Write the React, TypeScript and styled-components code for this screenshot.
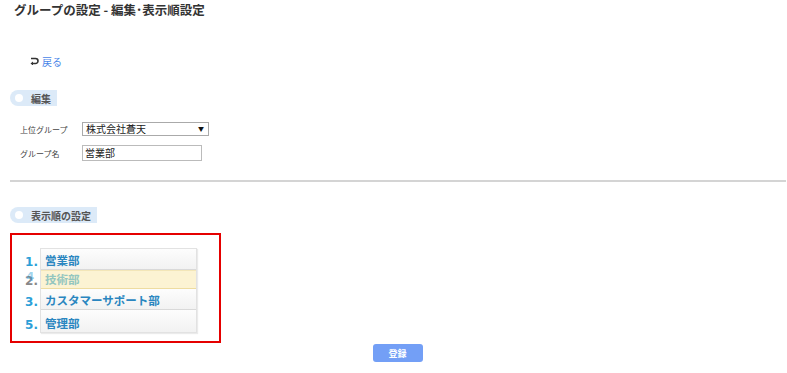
import React from "react";
import styled, { createGlobalStyle } from "styled-components";

const Global = createGlobalStyle`
  html, body { margin: 0; padding: 0; background: #fff; }
  body { font-family: "Noto Sans CJK JP", "Liberation Sans", sans-serif; color: #333; }
`;

const Page = styled.div`
  width: 787px;
  display: flex;
  flex-direction: column;
`;

const Title = styled.h1`
  margin: 0;
  padding: 2px 0 0 14px;
  height: 20px;
  font-size: 12.5px;
  font-weight: bold;
  line-height: 16px;
  color: #333;
`;

const BackLink = styled.a`
  margin: 31px 0 0 30px;
  display: flex;
  align-items: center;
  gap: 3px;
  height: 16px;
  font-size: 10px;
  color: #4a86e8;
  text-decoration: none;
`;

const SectionHead = styled.div`
  align-self: flex-start;
  margin-left: 10px;
  height: 16px;
  display: flex;
  align-items: center;
  padding: 0 6px 0 5px;
  background: #dceaf8;
  border-radius: 8px 0 0 8px;
  font-size: 10px;
  font-weight: bold;
  color: #555;
  gap: 8px;
`;

const Dot = styled.span`
  width: 8px;
  height: 8px;
  border-radius: 50%;
  background: #fff;
`;

const Form = styled.div`
  margin: 16px 0 0 20px;
  display: flex;
  flex-direction: column;
  gap: 10px;
`;

const Row = styled.div`
  display: flex;
  align-items: center;
  height: 14px;
`;

const Label = styled.span`
  width: 62px;
  font-size: 8px;
  color: #444;
`;

const Select = styled.div`
  width: 118px;
  height: 12px;
  border: 1px solid #aaa;
  display: flex;
  align-items: center;
  justify-content: space-between;
  padding: 0 4px 0 3px;
  box-sizing: content-box;
  font-size: 10px;
  color: #222;
  line-height: 12px;
`;

const Arrow = styled.span`
  font-size: 6px;
  color: #111;
`;

const Input = styled.div<{ $w: number }>`
  width: ${(p) => p.$w}px;
  height: 14px;
  border: 1px solid #bbb;
  padding-left: 2px;
  font-size: 10px;
  line-height: 14px;
  color: #222;
`;

const Rule = styled.hr`
  margin: 20px 1px 0 10px;
  border: none;
  height: 2px;
  background: #d4d4d4;
`;

const Spacer = styled.div<{ $h: number }>`
  height: ${(p) => p.$h}px;
`;

const Box = styled.div`
  margin: 10px 0 0 10px;
  width: 207px;
  height: 93px;
  border: 2px solid #e50000;
  padding: 13px 0 0 0;
  box-sizing: content-box;
  display: flex;
  align-items: flex-start;
`;

const Numbers = styled.div`
  width: 26px;
  padding-top: 1px;
  display: flex;
  flex-direction: column;
  align-items: flex-end;
`;

const Num = styled.div<{ $h: number }>`
  position: relative;
  height: ${(p) => p.$h}px;
  display: flex;
  align-items: flex-end;
  padding-bottom: 1px;
  box-sizing: border-box;
  font-size: 12px;
  font-weight: bold;
  color: #2b9fd8;
  font-family: "DejaVu Sans", sans-serif;
`;

const NumGhost = styled.span`
  color: #888;
`;

const GhostOverlay = styled.span`
  position: absolute;
  left: 1px;
  top: 0px;
  color: rgba(43, 159, 216, 0.45);
`;

const List = styled.div`
  margin-left: 2px;
  width: 155px;
  display: flex;
  flex-direction: column;
  border: 1px solid #e2e2e2;
  box-shadow: 1px 1px 1px rgba(0,0,0,0.08);
`;

const Item = styled.div<{ $h: number; $hl?: boolean }>`
  height: ${(p) => p.$h}px;
  display: flex;
  align-items: flex-end;
  padding: 0 0 1px 4px;
  box-sizing: border-box;
  font-size: 11.5px;
  font-weight: bold;
  color: ${(p) => (p.$hl ? "#94c6bf" : "#2a86c0")};
  background: ${(p) =>
    p.$hl ? "#fcf3d3" : "linear-gradient(#fdfdfd, #f2f2f2)"};
  border-bottom: 1px solid ${(p) => (p.$hl ? "#eedca0" : "#d9d9d9")};
  border-top: ${(p) => (p.$hl ? "1px solid #f3e6b8" : "none")};
  &:last-child { border-bottom: none; }
`;

const Footer = styled.div`
  display: flex;
  justify-content: center;
  padding-left: 8px;
  margin-top: 1px;
`;

const Button = styled.button`
  width: 50px;
  height: 18px;
  border: none;
  border-radius: 3px;
  background: #739ff6;
  color: #fff;
  font-family: "Noto Sans CJK JP", sans-serif;
  font-size: 9px;
  font-weight: bold;
  padding: 0;
`;

const BackIcon = () => (
  <svg width="9" height="8" viewBox="0 0 9 8">
    <path d="M1 1.5 H5.5 A2.5 2.5 0 0 1 5.5 6.5 H2" stroke="#333" strokeWidth="1.6" fill="none" />
    <path d="M0.5 6.5 L3 4.5 L3 8.5 Z" fill="#333" />
  </svg>
);

export default function App() {
  return (
    <Page>
      <Global />
      <Title>グループの設定 - 編集･表示順設定</Title>
      <BackLink href="#">
        <BackIcon />
        戻る
      </BackLink>
      <Spacer $h={21} />
      <SectionHead>
        <Dot />
        編集
      </SectionHead>
      <Form>
        <Row>
          <Label>上位グループ</Label>
          <Select>
            株式会社蒼天
            <Arrow>▼</Arrow>
          </Select>
        </Row>
        <Row>
          <Label>グループ名</Label>
          <Input $w={116}>営業部</Input>
        </Row>
      </Form>
      <Rule />
      <Spacer $h={25} />
      <SectionHead>
        <Dot />
        表示順の設定
      </SectionHead>
      <Box>
        <Numbers>
          <Num $h={21}>1.</Num>
          <Num $h={19}>
            <NumGhost>2.</NumGhost>
            <GhostOverlay>4</GhostOverlay>
          </Num>
          <Num $h={21}>3.</Num>
          <Num $h={23}>5.</Num>
        </Numbers>
        <List>
          <Item $h={21}>営業部</Item>
          <Item $h={19} $hl>技術部</Item>
          <Item $h={21}>カスタマーサポート部</Item>
          <Item $h={22}>管理部</Item>
        </List>
      </Box>
      <Footer>
        <Button>登録</Button>
      </Footer>
    </Page>
  );
}
